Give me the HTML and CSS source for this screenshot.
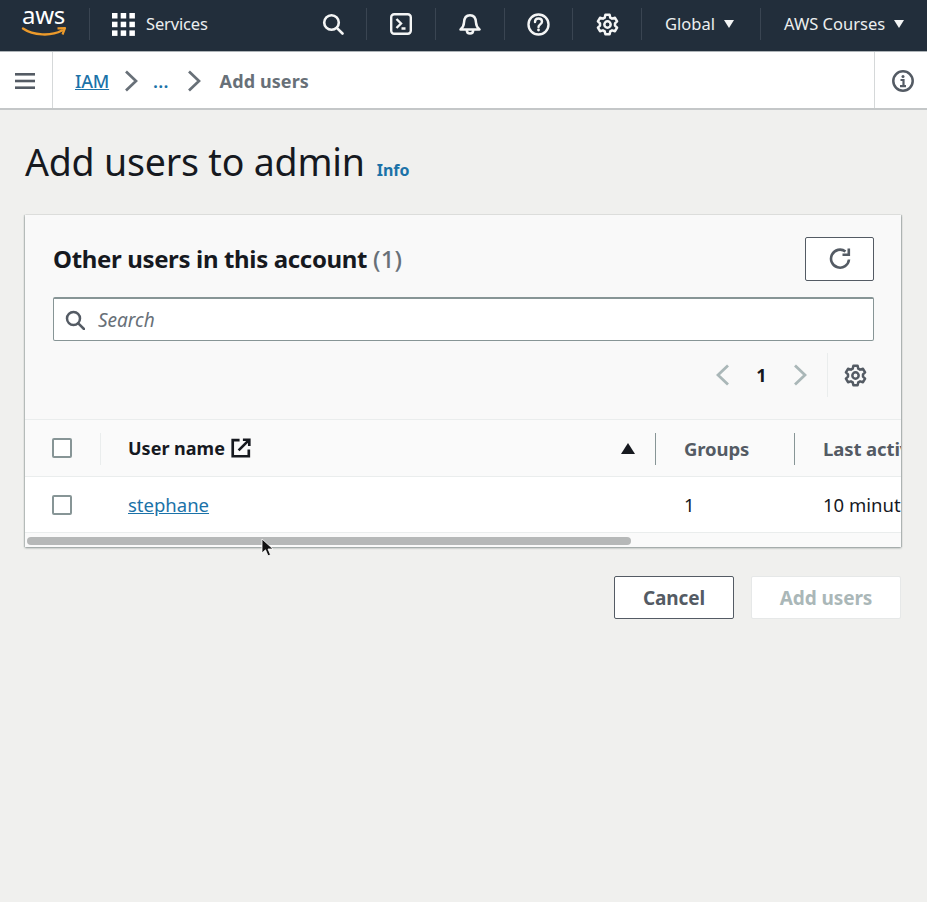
FILE: index.html
```html
<!DOCTYPE html>
<html lang="en">
<head>
<meta charset="utf-8">
<title>Add users to admin</title>
<link rel="stylesheet" href="styles.css">
</head>
<body>
<header class="topbar">
  <div class="logo">
    <span class="logo-text">aws</span>
    <svg class="smile" width="46" height="12" viewBox="0 0 46 12"><path d="M2 2.500C12 9.500 30 10.500 41 4.500" fill="none" stroke="#ec9a2b" stroke-width="2.400" stroke-linecap="round"/><path d="M36.500 2.300L44 2.200L41.500 8.500" fill="none" stroke="#ec9a2b" stroke-width="2.200" stroke-linejoin="round"/></svg>
  </div>
  <div class="tb-sep"></div>
  <div class="services">
    <svg class="grid-icon" width="23" height="23" viewBox="0 0 23 23" fill="#fff"><rect x="0" y="0" width="5.500" height="5.500"/><rect x="8.700" y="0" width="5.500" height="5.500"/><rect x="17.400" y="0" width="5.500" height="5.500"/><rect x="0" y="8.700" width="5.500" height="5.500"/><rect x="8.700" y="8.700" width="5.500" height="5.500"/><rect x="17.400" y="8.700" width="5.500" height="5.500"/><rect x="0" y="17.400" width="5.500" height="5.500"/><rect x="8.700" y="17.400" width="5.500" height="5.500"/><rect x="17.400" y="17.400" width="5.500" height="5.500"/></svg>
    <span class="services-label">Services</span>
  </div>
  <div class="tb-right">
    <div class="tb-icon ic-search"><svg width="22" height="22" viewBox="0 0 22 22" fill="none" stroke="#f4f5f5" stroke-width="2.600"><circle cx="9.500" cy="9.500" r="7.300"/><path d="M14.800 14.800L20.500 20.500" stroke-linecap="round"/></svg></div>
    <div class="tb-sep"></div>
    <div class="tb-icon ic-wide"><svg width="22" height="22" viewBox="0 0 22 22" fill="none" stroke="#f4f5f5" stroke-width="2.400"><rect x="1.200" y="1.200" width="19.600" height="19.600" rx="3"/><path d="M6.500 6l4.500 4.500-4.500 4.500M11.500 15.500h4" /></svg></div>
    <div class="tb-sep"></div>
    <div class="tb-icon ic-wide"><svg width="22" height="22" viewBox="0 0 22 22" fill="none" stroke="#f4f5f5" stroke-width="2.500" stroke-linejoin="round"><path d="M1.500 16.500C4 14.500 4.800 13 5 9.500 5.200 5 7.500 2.200 11 2.200s5.800 2.800 6 7.300c.2 3.500 1 5 3.500 7z"/><path d="M7.800 17c0 2.200 1.400 3.600 3.200 3.600s3.200-1.400 3.200-3.600"/></svg></div>
    <div class="tb-sep"></div>
    <div class="tb-icon ic-help"><svg width="23" height="23" viewBox="0 0 23 23" fill="none" stroke="#f4f5f5" stroke-width="2.400"><circle cx="11.500" cy="11.500" r="10"/><path d="M8 9c0-2.200 1.500-3.500 3.500-3.500S15 6.800 15 8.700c0 2.600-3.500 2.700-3.500 5.300" stroke-linecap="round"/><circle cx="11.500" cy="17" r="1.400" fill="#f4f5f5" stroke="none"/></svg></div>
    <div class="tb-sep"></div>
    <div class="tb-icon ic-wide"><svg width="23" height="23" viewBox="0 0 24 24" fill="none" stroke="#f4f5f5" stroke-width="2.600" stroke-linejoin="round"><path d="M9.800 1.800h4.400l.7 3 1.900 1.100 3-.9 2.200 3.800-2.200 2.100v2.200l2.200 2.100-2.200 3.800-3-.9-1.900 1.100-.7 3H9.800l-.7-3-1.900-1.100-3 .9L2 15.200l2.200-2.100v-2.200L2 8.800 4.200 5l3 .9 1.900-1.100z"/><circle cx="12" cy="12" r="3.300"/></svg></div>
    <div class="tb-sep"></div>
    <div class="tb-menu menu-global"><span class="tb-label">Global</span><span class="caret"></span></div>
    <div class="tb-sep"></div>
    <div class="tb-menu menu-account"><span class="tb-label">AWS Courses</span><span class="caret"></span></div>
  </div>
</header>

<nav class="crumbbar">
  <div class="hamburger"><svg width="20" height="16" viewBox="0 0 20 16" fill="#545b64"><rect width="20" height="2.600"/><rect y="6.700" width="20" height="2.600"/><rect y="13.400" width="20" height="2.600"/></svg></div>
  <div class="crumbs">
    <a class="link" href="#">IAM</a>
    <svg class="crumb-chev" width="14" height="22" viewBox="0 0 14 22" fill="none" stroke="#687078" stroke-width="2.700"><path d="M2 1.500L12 11 2 20.500"/></svg>
    <span class="dots">...</span>
    <svg class="crumb-chev chev-last" width="14" height="22" viewBox="0 0 14 22" fill="none" stroke="#687078" stroke-width="2.700"><path d="M2 1.500L12 11 2 20.500"/></svg>
    <span class="crumb-current">Add users</span>
  </div>
  <div class="info-tab"><svg width="22" height="22" viewBox="0 0 22 22" fill="none" stroke="#545b64" stroke-width="2.500"><circle cx="11" cy="11" r="9.700"/><circle cx="11" cy="6.500" r="1.500" fill="#545b64" stroke="none"/><path d="M8.500 10h3v6M8 16.200h6" stroke-width="2.200"/></svg></div>
</nav>

<main class="content">
  <div class="title-row">
    <h1>Add users to admin</h1>
    <a class="info-link" href="#">Info</a>
  </div>

  <div class="card-wrap">
    <section class="card">
      <div class="card-head">
        <div class="head-row">
          <h2>Other users in this account <span class="count">(1)</span></h2>
          <button class="refresh" type="button" aria-label="Refresh"><svg width="24" height="24" viewBox="0 0 24 24" fill="none" stroke="#545b64" stroke-width="2.600"><path d="M21 12.500a9 9 0 1 1-3.500-8"/><path d="M20.800 1.500v6.300h-6.300"/></svg></button>
        </div>
        <div class="search">
          <svg width="20" height="20" viewBox="0 0 20 20" fill="none" stroke="#545b64" stroke-width="2.500"><circle cx="8.500" cy="8.500" r="6.500"/><path d="M13.300 13.300L19 19" stroke-linecap="round"/></svg>
          <span class="search-ph">Search</span>
        </div>
        <div class="pager">
          <svg width="14" height="22" viewBox="0 0 14 22" fill="none" stroke="#aab7b8" stroke-width="2.800"><path d="M12 1.500L2 11l10 9.500"/></svg>
          <span class="page-num">1</span>
          <svg width="14" height="22" viewBox="0 0 14 22" fill="none" stroke="#aab7b8" stroke-width="2.800"><path d="M2 1.500L12 11 2 20.500"/></svg>
          <div class="pager-sep"></div>
          <svg class="pref" width="23" height="23" viewBox="0 0 24 24" fill="none" stroke="#545b64" stroke-width="2.600" stroke-linejoin="round"><path d="M9.800 1.800h4.400l.7 3 1.900 1.100 3-.9 2.200 3.800-2.200 2.100v2.200l2.200 2.100-2.200 3.800-3-.9-1.900 1.100-.7 3H9.800l-.7-3-1.900-1.100-3 .9L2 15.200l2.200-2.100v-2.200L2 8.800 4.200 5l3 .9 1.900-1.100z"/><circle cx="12" cy="12" r="3.300"/></svg>
        </div>
      </div>

      <div class="table">
        <div class="tr th-row">
          <div class="cell c-check"><span class="checkbox"></span></div>
          <div class="cell c-name">
            <span class="sep-light"></span>
            <span class="th-primary">User name</span>
            <svg class="ext" width="20" height="20" viewBox="0 0 21 21" fill="none" stroke="#16191f" stroke-width="2.800"><path d="M9 2.300H1.800v16.900h16.900V12"/><path d="M8 13L19 2M12.500 1.800h6.700v6.700"/></svg>
            <span class="sort-up"></span>
          </div>
          <div class="cell c-groups"><span class="sep-dark"></span><span class="th-label">Groups</span></div>
          <div class="cell c-last"><span class="sep-dark"></span><span class="th-label">Last activity</span></div>
        </div>
        <div class="tr td-row">
          <div class="cell c-check"><span class="checkbox"></span></div>
          <div class="cell c-name"><a class="link" href="#">stephane</a></div>
          <div class="cell c-groups">1</div>
          <div class="cell c-last">10 minutes ago</div>
        </div>
      </div>
      <div class="scrolltrack"><div class="scrollthumb"></div></div>
    </section>
    <svg class="cursor" width="13" height="19" viewBox="0 0 13 19"><path d="M1 1v14l3.500-3.200 2.500 6 2.500-1-2.500-5.800H12z" fill="#111" stroke="#fff" stroke-width=".8"/></svg>
  </div>

  <div class="actions">
    <button class="btn btn-cancel" type="button">Cancel</button>
    <button class="btn btn-disabled" type="button">Add users</button>
  </div>
</main>
</body>
</html>
```
FILE: styles.css
```css
* { box-sizing: border-box; }
html, body { margin: 0; height: 100%; }
body {
  background: #f0f0ee;
  color: #16191f;
  font-family: "Noto Sans", "Open Sans", sans-serif;
  overflow: hidden;
}
a { color: #1b72a8; }

.topbar {
  height: 52px;
  background: #222e3b;
  border-bottom: 1px solid #aeb4b8;
  display: flex;
  align-items: center;
  padding-bottom: 3px;
  color: #eceeef;
  font-size: 16.500px;
}
.logo {
  width: 89px;
  height: 48px;
  padding: 5px 0 0 22px;
  display: flex;
  flex-direction: column;
  gap: 1px;
}
.logo-text { font-size: 24px; line-height: 20px; color: #fff; letter-spacing: -.3px; }
.smile { margin-left: -1px; }
.tb-sep { width: 1px; height: 32px; background: #3a4552; flex: none; }
.services { display: flex; align-items: center; gap: 11px; margin-left: 22px; }
.services-label { letter-spacing: -.15px; padding-bottom: 2px; }
.tb-right { display: flex; align-items: center; margin-left: auto; }
.tb-icon { display: flex; align-items: center; justify-content: center; }
.ic-search { width: 67px; padding-left: 1px; }
.ic-wide { width: 68px; }
.ic-help { width: 67px; }
.tb-menu { display: flex; align-items: center; gap: 9px; white-space: nowrap; }
.tb-label { padding-bottom: 2px; }
.menu-global { width: 118px; padding-left: 23px; }
.menu-account { width: 166px; padding-left: 23px; }
.caret {
  width: 0; height: 0;
  border-left: 5.500px solid transparent;
  border-right: 5.500px solid transparent;
  border-top: 8px solid #f4f5f5;
}

.crumbbar {
  height: 58px;
  background: #fff;
  border-bottom: 2px solid #c4c7c8;
  display: flex;
  align-items: stretch;
}
.hamburger {
  width: 53px;
  border-right: 1px solid #d5d8d9;
  display: flex;
  align-items: center;
  justify-content: center;
  padding: 2px 2px 0 0;
}
.crumbs {
  flex: 1;
  display: flex;
  align-items: center;
  padding: 2px 0 0 22px;
  font-size: 18px;
}
.crumb-chev { margin: 0 15px 0 15px; }
.chev-last { margin: 0 16px 0 18px; }
.crumbs .link { font-weight: 500; letter-spacing: -.2px; }
.dots { color: #1b72a8; font-weight: 600; letter-spacing: .2px; }
.crumb-current { color: #687078; font-weight: 700; letter-spacing: .1px; margin-left: 3px; }
.info-tab {
  width: 53px;
  border-left: 1px solid #d5d8d9;
  display: flex;
  align-items: center;
  justify-content: center;
  padding: 2px 0 0 3px;
}

.content { padding: 27px 26px 0 25px; }
.title-row { display: flex; align-items: baseline; height: 50px; }
h1 {
  margin: 0;
  font-size: 37.500px;
  font-weight: 400;
  line-height: 50px;
  letter-spacing: -.2px;
  color: #16191f;
}
.info-link {
  margin-left: 12px;
  font-size: 16px;
  font-weight: 700;
  text-decoration: none;
  color: #1b72a8;
}

.card-wrap { position: relative; margin-top: 28px; }
.card {
  background: #fff;
  box-shadow: 0 1px 2px rgba(30, 50, 50, .45), 1px 0 1px rgba(30, 50, 50, .2), -1px 0 1px rgba(30, 50, 50, .15);
  overflow: hidden;
  height: 332px;
}
.card-head {
  height: 205px;
  background: #f9f9f9;
  padding: 22px 27px 0 28px;
  border-bottom: 1px solid #eaeded;
}
.head-row { display: flex; justify-content: space-between; align-items: center; height: 44px; }
h2 { margin: 0 0 2px; font-size: 24px; font-weight: 700; letter-spacing: -.35px; color: #16191f; }
.count { font-weight: 500; color: #687078; letter-spacing: .2px; }
.refresh {
  width: 69px; height: 44px;
  background: #fff;
  border: 1px solid #545b64;
  border-radius: 2px;
  display: flex; align-items: center; justify-content: center;
  padding: 0;
}
.search {
  margin-top: 16px;
  height: 44px;
  background: #fff;
  border: 1px solid #879596;
  border-top-width: 2px;
  border-radius: 2px;
  display: flex;
  align-items: center;
  padding-left: 11px;
  gap: 13px;
}
.search-ph { font-style: italic; font-size: 19px; color: #687078; }
.pager { display: flex; align-items: center; justify-content: flex-end; height: 44px; margin-top: 12px; }
.page-num { width: 63px; text-align: center; font-size: 18px; font-weight: 700; }
.pager-sep { width: 1px; height: 44px; background: #eaeded; margin: 0 16px 0 20px; }
.pref { margin-right: 7px; }

.tr { display: flex; align-items: center; width: 1000px; }
.th-row { height: 57px; background: #fafafa; border-bottom: 1px solid #eaeded; }
.td-row { height: 56px; background: #fff; font-size: 18.500px; border-bottom: 1px solid #eaeded; }
.cell { display: flex; align-items: center; height: 100%; position: relative; white-space: nowrap; }
.c-check { width: 75px; padding-left: 27px; }
.c-name { width: 555px; padding-left: 28px; gap: 6px; }
.c-groups { width: 139px; padding-left: 29px; }
.c-last { padding-left: 29px; flex: 1; }
.checkbox {
  width: 20px; height: 20px;
  background: #fff;
  border: 2px solid #879596;
  border-radius: 2px;
}
.th-primary { font-size: 18px; font-weight: 700; color: #16191f; }
.th-label { font-size: 18.500px; font-weight: 700; letter-spacing: -.1px; color: #545b64; }
.sep-light, .sep-dark { position: absolute; left: 0; top: 13px; height: 32px; width: 1px; }
.sep-light { background: #eaeded; }
.sep-dark { background: #879596; }
.sort-up {
  position: absolute;
  right: 20px;
  top: 23px;
  width: 0; height: 0;
  border-left: 7.500px solid transparent;
  border-right: 7.500px solid transparent;
  border-bottom: 11px solid #16191f;
}
.scrolltrack { height: 14px; background: #fafafa; padding-top: 4px; padding-left: 2px; }
.scrollthumb { width: 604px; height: 8px; background: #b6b8b8; border-radius: 4px; }
.cursor { position: absolute; left: 236px; top: 323px; }

.actions { display: flex; justify-content: flex-end; gap: 17px; margin-top: 29px; }
.btn {
  height: 43px;
  border-radius: 2px;
  font-family: inherit;
  font-size: 19px;
  font-weight: 700;
  letter-spacing: -.1px;
  background: #fff;
  padding: 0;
}
.btn-cancel { width: 120px; border: 1px solid #545b64; color: #545b64; }
.btn-disabled { width: 150px; border: 1px solid #e6e8e8; color: #aab7b8; }
```
